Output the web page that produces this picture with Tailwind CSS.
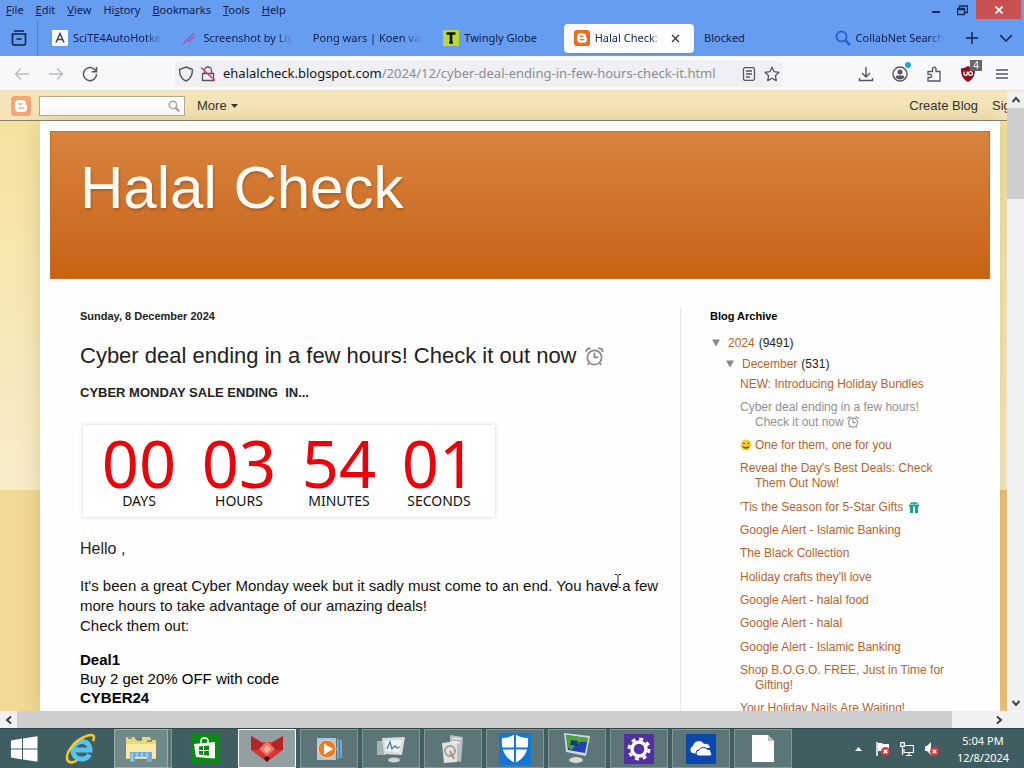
<!DOCTYPE html>
<html lang="en">
<head>
<meta charset="utf-8">
<title>Halal Check</title>
<script src="https://cdn.jsdelivr.net/npm/@tailwindcss/browser@4"></script>
</head>
<body class="h-screen overflow-hidden flex flex-col font-['Noto_Sans','Open_Sans',sans-serif] text-[11px] text-[#101c48]">
<svg class="hidden">
  <symbol id="clock" viewBox="0 0 20 20"><g fill="none" stroke="currentColor" stroke-width="1.8"><circle cx="10" cy="11" r="7.5"/><path d="M10 6v5h4M1 5q1-4 5-3.500M19 5q-1-4-5-3.500M4.500 17 3 19M15.500 17l1.500 2"/></g></symbol>
  <symbol id="blogger" viewBox="0 0 20 20"><rect width="20" height="20" rx="3.500" fill="currentColor"/><path fill="#fff" d="M8 4h3a4 4 0 0 1 4 4c0 1 .3 1.300 1 1.500v3A3.800 3.800 0 0 1 12 16H8a4 4 0 0 1-4-4V8a4 4 0 0 1 4-4"/><path stroke="currentColor" stroke-width="1.600" stroke-linecap="round" d="M8 8h3M8 12h4.500"/></symbol>
  <symbol id="search" viewBox="0 0 16 16"><g fill="none" stroke="currentColor"><circle cx="6.500" cy="6.500" r="5" stroke-width="2"/><path stroke-width="2.800" d="m10 10 5 5"/></g></symbol>
  <symbol id="badx" viewBox="0 0 10 10"><circle cx="5" cy="5" r="5" fill="#d8373a"/><path d="m3 3 4 4m0-4L3 7" stroke="#fff" stroke-width="1.500"/></symbol>
</svg>

<header class="bg-[#679df1] shrink-0">
  <div class="h-5 flex items-start justify-between">
    <nav class="flex gap-3 pl-[6px] leading-5" aria-label="Menu bar">
      <button><u>F</u>ile</button><button><u>E</u>dit</button><button><u>V</u>iew</button><button>Hi<u>s</u>tory</button><button><u>B</u>ookmarks</button><button><u>T</u>ools</button><button><u>H</u>elp</button>
    </nav>
    <div class="flex items-start pr-[3px]">
      <button aria-label="Minimize" class="w-6 h-5 grid place-items-center"><svg class="w-2 h-2" viewBox="0 0 8 8"><path d="M0 6h8" stroke="#16284f" stroke-width="2"/></svg></button>
      <button aria-label="Restore" class="w-7 h-5 grid place-items-center"><svg class="w-[11px] h-[11px]" viewBox="0 0 11 11" fill="none" stroke="#16284f"><path d="M.5 3.500h7v6h-7zM2.500 3V1h8v6.500H8M.5 4.500h7" stroke-width="1.300"/></svg></button>
      <button aria-label="Close" class="w-[45px] h-[19px] bg-[#c75050] grid place-items-center"><svg class="w-2 h-2" viewBox="0 0 8 8"><path d="m.5.5 7 7m0-7-7 7" stroke="#fff" stroke-width="1.700"/></svg></button>
    </div>
  </div>
  <div class="h-9 flex items-center">
    <button aria-label="Recent browsing" class="w-[37px] grid place-items-center self-stretch"><svg class="w-4 h-4" viewBox="0 0 16 16" fill="none" stroke="#10204c" stroke-width="1.600"><path d="M3 1h10M1.500 4h13v9.500a1.500 1.500 0 0 1-1.500 1.500H3a1.500 1.500 0 0 1-1.500-1.500zM5.500 9h5"/></svg></button>
    <div class="w-px h-9 bg-[#527fce] mr-1 self-start shrink-0"></div>
    <div role="tablist" class="flex flex-1 min-w-0 h-[29px] whitespace-nowrap">
      <button role="tab" class="flex flex-1 basis-0 min-w-0 items-center gap-[5px] px-[10px]"><svg class="w-4 h-4 shrink-0" viewBox="0 0 16 16"><rect width="16" height="16" rx="1" fill="#f8f8fb"/><path d="m4 12.500 4-9 4 9M5.500 9.500h5" fill="none" stroke="#444" stroke-width="1.500"/></svg><span class="overflow-hidden flex-1 text-left [mask-image:linear-gradient(to_right,#000_82%,transparent)]">SciTE4AutoHotkey</span></button>
      <button role="tab" class="flex flex-1 basis-0 min-w-0 items-center gap-[5px] px-[10px]"><svg class="w-4 h-4 shrink-0" viewBox="0 0 16 16"><path d="M1 14 12 3M6 12l7-6" stroke="#b04aa8" stroke-width="1.300"/></svg><span class="overflow-hidden flex-1 text-left [mask-image:linear-gradient(to_right,#000_82%,transparent)]">Screenshot by Lightshot</span></button>
      <button role="tab" class="flex flex-1 basis-0 min-w-0 items-center px-[10px]"><span class="overflow-hidden flex-1 text-left [mask-image:linear-gradient(to_right,#000_82%,transparent)]">Pong wars | Koen van Gilst</span></button>
      <button role="tab" class="flex flex-1 basis-0 min-w-0 items-center gap-[5px] px-[10px]"><svg class="w-4 h-4 shrink-0" viewBox="0 0 16 16"><rect width="16" height="16" fill="#bcd832"/><path d="M3.500 3.500h9M8 3v10M6 12.500h4" stroke="#111" stroke-width="2.600"/></svg><span class="overflow-hidden flex-1 text-left">Twingly Globe</span></button>
      <button role="tab" aria-selected="true" class="flex flex-1 basis-0 min-w-0 items-center gap-[5px] px-[10px] rounded bg-[#fdfdff] shadow-sm"><svg class="w-4 h-4 shrink-0 text-[#ee6a21]"><use href="#blogger"/></svg><span class="overflow-hidden flex-1 text-left [mask-image:linear-gradient(to_right,#000_82%,transparent)]">Halal Check: Cyber</span><svg class="w-[9px] h-[9px] mx-[4px] shrink-0" viewBox="0 0 9 9"><path d="m1 1 7 7m0-7L1 8" stroke="#333" stroke-width="1.200"/></svg></button>
      <button role="tab" class="flex flex-1 basis-0 min-w-0 items-center px-[10px]"><span>Blocked</span></button>
      <button role="tab" class="flex flex-1 basis-0 min-w-0 items-center gap-[5px] px-[10px]"><svg class="w-4 h-4 shrink-0 text-[#2b62cf]"><use href="#search"/></svg><span class="overflow-hidden flex-1 text-left [mask-image:linear-gradient(to_right,#000_82%,transparent)]">CollabNet Search</span></button>
    </div>
    <button aria-label="New tab" class="w-[33px] grid place-items-center"><svg class="w-3 h-3" viewBox="0 0 12 12"><path d="M6 0v12M0 6h12" stroke="#10204c" stroke-width="1.400"/></svg></button>
    <button aria-label="List all tabs" class="w-9 grid place-items-center"><svg class="w-3 h-3" viewBox="0 0 12 12"><path d="m0 3 6 6 6-6" fill="none" stroke="#10204c" stroke-width="1.500"/></svg></button>
  </div>
</header>

<div class="h-[35px] shrink-0 bg-[#f8f8fb] flex items-center pt-[2px] border-b border-[#e8dfc6] text-[#55555f]">
  <div class="flex gap-[18px] pl-[14px] w-[175px]">
    <button aria-label="Back"><svg class="w-4 h-4 text-[#b9b9bf]" viewBox="0 0 16 16" fill="none" stroke="currentColor" stroke-width="1.300"><path d="M15 8H1.500M7 2.500 1.500 8 7 13.500"/></svg></button>
    <button aria-label="Forward"><svg class="w-4 h-4 text-[#b9b9bf]" viewBox="0 0 16 16" fill="none" stroke="currentColor" stroke-width="1.300"><path d="M1 8h13.500M9 2.500 14.500 8 9 13.500"/></svg></button>
    <button aria-label="Reload"><svg class="w-4 h-4" viewBox="0 0 16 16" fill="none" stroke="currentColor" stroke-width="1.500"><path d="M14.500 8A6.500 6.500 0 1 1 12 3l2 2M14.500 1v4.700H9.700"/></svg></button>
  </div>
  <div class="flex flex-1 min-w-0 items-center h-[26px] bg-[#f0f0f4] rounded px-[3px]">
    <svg class="w-4 h-4 shrink-0" viewBox="0 0 16 16" fill="none" stroke="currentColor" stroke-width="1.400"><path d="M8 1 14.500 3.500C14.500 9 13 13 8 15 3 13 1.500 9 1.500 3.500z"/></svg>
    <svg class="w-4 h-4 shrink-0 ml-[6px]" viewBox="0 0 16 16" fill="none" stroke="currentColor" stroke-width="1.300"><path d="M2.500 7.500h11v7h-11zM4.500 7V4.500a3.500 3.500 0 0 1 7 0V7"/><path d="m1 1.500 14 13" stroke="#d83c6a" stroke-width="1.500"/></svg>
    <span class="ml-[7px] flex-1 min-w-0 overflow-hidden whitespace-nowrap text-[13px] text-[#8c8c93]"><span class="text-[#15141a]">ehalalcheck.blogspot.com</span>/2024/12/cyber-deal-ending-in-few-hours-check-it.html</span>
    <button aria-label="Reader view" class="mr-2"><svg class="w-[14px] h-[14px] block" viewBox="0 0 14 14" fill="none" stroke="currentColor" stroke-width="1.300"><rect x="1.500" y=".7" width="11" height="12.600" rx="1.500"/><path d="M4 4h6M4 7h6M4 10h4"/></svg></button>
    <button aria-label="Bookmark"><svg class="w-4 h-4 block" viewBox="0 0 16 16" fill="none" stroke="currentColor" stroke-width="1.300" stroke-linejoin="round"><path d="m8 1.200 2.100 4.500 4.900.6-3.600 3.400.9 4.900L8 12.200l-4.300 2.400.9-4.900L1 6.300l4.900-.6z"/></svg></button>
  </div>
  <div class="flex gap-[18px] pl-[75px] pr-[14px]">
    <button aria-label="Downloads"><svg class="w-4 h-4" viewBox="0 0 16 16" fill="none" stroke="currentColor" stroke-width="1.400"><path d="M8 1v10M4 7l4 4 4-4M1.500 12v2.500h13V12"/></svg></button>
    <button aria-label="Account" class="relative"><svg class="w-4 h-4" viewBox="0 0 16 16"><circle cx="8" cy="8" r="7" fill="none" stroke="currentColor" stroke-width="1.400"/><circle cx="8" cy="6" r="2.500" fill="currentColor"/><path d="M3.500 11.500q0-2 2-2h5q2 0 2 2Q10.500 13.500 8 13.500t-4.500-2" fill="currentColor"/></svg><span class="absolute -top-1 -right-[3px] w-[6px] h-[6px] rounded-full bg-[#1ba6e0]"></span></button>
    <button aria-label="Extensions"><svg class="w-4 h-4" viewBox="0 0 16 16" fill="none" stroke="currentColor" stroke-width="1.300"><path d="M2 5.500h4.500V3a1.700 1.700 0 0 1 3.500 0v2.500h4V15H2v-3.500h2a1.600 1.600 0 0 0 0-3.200H2z"/></svg></button>
    <button aria-label="uBlock Origin" class="relative"><svg class="w-4 h-4" viewBox="0 0 16 16"><path d="M8 0q3 2.300 7 2.300C15.500 9 13 13.500 8 16 3 13.500.5 9 1 2.300 5 2.300 8 0 8 0" fill="#8c0f1c"/><path d="M4 5.500v3q1.700 1.700 3.200 0v-3" fill="none" stroke="#fff" stroke-width="1.200"/><circle cx="10.500" cy="7.500" r="1.900" fill="none" stroke="#fff" stroke-width="1.200"/></svg><span class="absolute -top-[6px] -right-[6px] w-3 h-[11px] bg-[#666] text-white text-[10px] leading-[11px] text-center">4</span></button>
    <button aria-label="Application menu"><svg class="w-4 h-4" viewBox="0 0 16 16"><path d="M2 4h12M2 8h12M2 12h12" stroke="currentColor" stroke-width="1.300"/></svg></button>
  </div>
</div>

<div class="flex flex-1 min-h-0 font-['Liberation_Sans',Arial,sans-serif] text-[#222]">
  <div class="flex-1 min-w-0 overflow-hidden flex flex-col bg-[linear-gradient(to_bottom,#f5e19c_0,#f8ecca_399px,transparent_399px),linear-gradient(to_right,#f2da94,#ecc37c)]">
    <div class="h-[30px] shrink-0 bg-[#f4e4b8] border-b border-[#8a7d6c] flex items-center text-[13px] text-[#333] whitespace-nowrap">
      <svg class="w-5 h-5 ml-[11px] text-[#f5a574]"><use href="#blogger"/></svg>
      <label class="ml-2 flex items-center w-[146px] h-5 bg-white border border-[#b9a98a] pr-1"><input type="search" aria-label="Search blog" class="min-w-0 flex-1 h-full outline-none"><svg class="w-3 h-3 text-[#a5a5a5]"><use href="#search"/></svg></label>
      <button class="ml-3 flex items-center gap-1">More <svg class="w-[7px] h-1" viewBox="0 0 7 4"><path d="M0 0h7L3.500 4z" fill="#333"/></svg></button>
      <div class="flex-1"></div>
      <a href="#" class="mr-[14px]">Create Blog</a>
      <a href="#" class="w-[15px] overflow-hidden">Sign In</a>
    </div>
    <div class="flex-1 min-h-0 ml-10 mr-[7px] bg-[#fefefe] px-[10px] pt-[10px] shadow-[0_0_20px_rgba(120,110,40,0.25)]">
      <div class="h-[148px] bg-linear-to-b from-[#d8833f] to-[#c86210] border border-[#c96c1e] pl-[29px] pt-[21px]">
        <h1 class="text-[60px] leading-[70px] text-[#fffdf8] [text-shadow:1px_2px_3px_rgba(0,0,0,0.2)]">Halal Check</h1>
      </div>
      <div class="flex pt-7">
        <article class="flex-1 min-w-0 pl-[30px] pr-6">
          <h2 class="text-[11px] leading-[18px] font-bold">Sunday, 8 December 2024</h2>
          <h3 class="mt-[17px] text-[22px] leading-7 flex items-center whitespace-nowrap">Cyber deal ending in a few hours! Check it out now <svg class="ml-2 w-[19px] h-[19px] text-[#888]"><use href="#clock"/></svg></h3>
          <p class="mt-[13px] text-[13px] leading-5 font-bold">CYBER MONDAY SALE ENDING&nbsp; IN...</p>
          <div class="mt-[22px] ml-[3px] w-[412px] h-[92px] bg-white shadow-[0_0_4px_rgba(0,0,0,0.18)] flex px-[6px] pt-[9px] text-center font-['Noto_Sans',sans-serif] text-[#111]">
            <div class="flex-1"><div class="text-[65px] leading-[58px] text-[#ee0008]">00</div><div class="text-sm leading-[18px]">DAYS</div></div>
            <div class="flex-1"><div class="text-[65px] leading-[58px] text-[#ee0008]">03</div><div class="text-sm leading-[18px]">HOURS</div></div>
            <div class="flex-1"><div class="text-[65px] leading-[58px] text-[#ee0008]">54</div><div class="text-sm leading-[18px]">MINUTES</div></div>
            <div class="flex-1"><div class="text-[65px] leading-[58px] text-[#ee0008]">01</div><div class="text-sm leading-[18px]">SECONDS</div></div>
          </div>
          <p class="mt-[22px] text-base leading-5">Hello ,</p>
          <p class="mt-[17px] text-[15px] leading-5 text-[#111] whitespace-nowrap">It's been a great Cyber Monday week but it sadly must come to an end. You have a few<br>more hours to take advantage of our amazing deals!<br>Check them out:</p>
          <p class="mt-[14px] text-[15px] leading-[19px] text-black"><b>Deal1</b><br>Buy 2 get 20% OFF with code<br><b>CYBER24</b></p>
        </article>
        <aside class="w-[310px] shrink-0 border-l border-[#e8e8e8] pl-[29px] h-[420px] text-xs text-[#b8622a]">
          <h2 class="text-[11px] leading-[18px] font-bold text-black">Blog Archive</h2>
          <div class="mt-2 leading-5 text-[#222] flex items-center"><button aria-label="Collapse 2024" class="mr-2 ml-[2px]"><svg class="w-2 h-2" viewBox="0 0 9 8"><path d="M0 0h9L4.500 8z" fill="#888"/></svg></button><a href="#" class="text-[#b8622a] mr-1">2024</a>(9491)</div>
          <div class="mt-px leading-5 text-[#222] flex items-center"><button aria-label="Collapse December" class="mr-2 ml-4"><svg class="w-2 h-2" viewBox="0 0 9 8"><path d="M0 0h9L4.500 8z" fill="#888"/></svg></button><a href="#" class="text-[#b8622a] mr-1">December</a>(531)</div>
          <ul class="mt-[2px] ml-[30px] w-[220px] flex flex-col gap-2 leading-[15px] [&>li]:pl-[15px] [&>li]:-indent-[15px]">
            <li class="leading-4"><a href="#">NEW: Introducing Holiday Bundles</a></li>
            <li><a href="#" class="text-[#8f8f8f]">Cyber deal ending in a few hours!<br>Check it out now <svg class="inline w-3 h-3 align-[-2px]"><use href="#clock"/></svg></a></li>
            <li><a href="#"><svg class="inline w-3 h-3 align-[-2px] mr-[3px]" viewBox="0 0 12 12"><circle cx="6" cy="6" r="5.500" fill="#f6cf2b"/><path d="M3 4.500h2M7.500 4 9 5M3 7.500q3 3 6 0" fill="none" stroke="#604510" stroke-width="1.200"/></svg>One for them, one for you</a></li>
            <li><a href="#">Reveal the Day's Best Deals: Check<br>Them Out Now!</a></li>
            <li class="leading-4"><a href="#">'Tis the Season for 5-Star Gifts <svg class="inline w-3 h-3 align-[-2px] ml-[1px]" viewBox="0 0 12 12"><path d="M1 3.500h10v2H1zM2 5h3v7H2zM7 5h3v7H7z" fill="#19a489"/><path d="M3 3q0-2 3-.5Q9 1 9 3" fill="none" stroke="#19a489" stroke-width="1.500"/></svg></a></li>
            <li><a href="#">Google Alert - Islamic Banking</a></li>
            <li><a href="#">The Black Collection</a></li>
            <li class="leading-4"><a href="#">Holiday crafts they'll love</a></li>
            <li><a href="#">Google Alert - halal food</a></li>
            <li><a href="#">Google Alert - halal</a></li>
            <li class="leading-4"><a href="#">Google Alert - Islamic Banking</a></li>
            <li><a href="#">Shop B.O.G.O. FREE, Just in Time for<br>Gifting!</a></li>
            <li><a href="#">Your Holiday Nails Are Waiting!</a></li>
          </ul>
        </aside>
      </div>
    </div>
  </div>
  <div class="w-[17px] shrink-0 bg-[#f0f0f1] flex flex-col items-center justify-between">
    <button aria-label="Scroll up" class="h-[17px] grid place-items-center"><svg class="w-2 h-2" viewBox="0 0 8 8"><path d="m.5 6 3.500-4 3.500 4" fill="none" stroke="#404040" stroke-width="2"/></svg></button>
    <div class="w-full h-[91px] bg-[#cdcdcd]"></div>
    <div class="flex-1"></div>
    <button aria-label="Scroll down" class="h-[17px] grid place-items-center"><svg class="w-2 h-2" viewBox="0 0 8 8"><path d="m.5 2 3.500 4 3.500-4" fill="none" stroke="#404040" stroke-width="2"/></svg></button>
  </div>
</div>

<div class="h-[17px] shrink-0 bg-[#f0f0f1] flex items-center">
  <button aria-label="Scroll left" class="w-[17px] grid place-items-center"><svg class="w-2 h-2" viewBox="0 0 8 8"><path d="M6 .5 2 4l4 3.500" fill="none" stroke="#404040" stroke-width="2"/></svg></button>
  <div class="flex-1 h-full bg-[#cdcdcd]"></div>
  <button aria-label="Scroll right" class="ml-[38px] mr-[17px] w-[17px] grid place-items-center"><svg class="w-2 h-2" viewBox="0 0 8 8"><path d="m2 .5 4 3.500-4 3.500" fill="none" stroke="#404040" stroke-width="2"/></svg></button>
</div>

<footer class="h-10 shrink-0 bg-[#405e62] border-t border-[#2c4448] flex items-stretch text-white">
  <button aria-label="Start" class="w-12 mr-1 grid place-items-center"><svg class="w-7 h-[26px]" viewBox="0 0 28 26" fill="#fff"><path d="M1 4.500 12 2.600v9.900H1zM13 2.400 27.500.3v12.200H13zM1 13.500h11v9.900L1 21.500zM13 13.500h14.500v12.200L13 23.600z"/></svg></button>
  <div class="flex gap-1 flex-1 min-w-0 [&>button]:w-[58px] [&>button]:shrink-0 [&>button]:grid [&>button]:place-items-center">
    <button aria-label="Internet Explorer"><svg class="w-8 h-8" viewBox="0 0 32 32" fill="none"><path d="M8 17h17c0-5-3-8.500-8-8.500S8 12.500 8 17.500 11.500 26 17 26q5 0 7.500-4.500" stroke="#56c3ee" stroke-width="5"/><path d="M3 28C-1 22 8 9 19 4c8-4 12-2 9 4M3 28q3 3 9-.5" stroke="#f3c92e" stroke-width="2.500"/></svg></button>
    <div class="flex w-[58px] shrink-0"><button aria-label="File Explorer" class="flex-1 grid place-items-center bg-[#72898b] border border-[#9aacad]"><svg class="w-8 h-7" viewBox="0 0 32 28"><path d="M1 2h8l2 3h6V2h8l1 3h5v19H1z" fill="#ead67c"/><path d="M1 9h30v14H1z" fill="#f8e9a4"/><path d="M3 3h4M12 5h5M22 6h5" stroke="#538b58" stroke-width="1.500"/><path d="M5 27V17h22v10h-5v-5H10v5z" fill="#6faedb"/><path d="M7 18v8M12 18v4M17 18v4M22 18v4" stroke="#d2ebfa"/></svg></button><span class="w-1 bg-[#5d7578] border-y border-r border-[#81979a]"></span></div>
    <button aria-label="Store"><svg class="w-7 h-[31px]" viewBox="0 0 28 31"><path fill="#0c8a16" d="M0 0h28v31H0z"/><path d="m3 11 21-2v16.500L5 24z" fill="#fff"/><path d="M10 11V8q0-3 3.500-3T17 8v2" fill="none" stroke="#fff" stroke-width="1.500"/><path d="m8 13.500 4-.4V17H8zM13 13l5-.5V17h-5zM8 18h4v4l-4-.5zM13 18h5v4.700l-5-.5z" fill="#0c8a16"/></svg></button>
    <button aria-label="Fox browser" class="bg-[#939fa1] border border-white"><svg class="w-[34px] h-7" viewBox="0 0 34 28"><path d="m1 1 10 6h12l10-6v14L17 27 1 15z" fill="#d93535"/><path d="m1 1 10 6 6 8L1 15zM33 1 23 7l-6 8 16 0z" fill="#b52228"/><path d="m17 6 8 8-8 7-8-7z" fill="#f07565"/><path d="m17 10 4 4-4 4-4-4z" fill="#f8b0a0"/><path d="m14 23 3-2 3 2-3 4z" fill="#471014"/></svg></button>
    <button aria-label="Media player" class="bg-[#5d7578] border border-[#81979a]"><svg class="w-7 h-7" viewBox="0 0 28 28"><path d="M2 3h19v22H2z" fill="#a8c8de"/><path d="M22 4h2v20h-2zM25 5h2v18h-2z" fill="#6fa9d4"/><circle cx="12" cy="14" r="9" fill="#ee7b20" stroke="#f8ded0"/><path d="m9 8.500 9 5.500-9 5.500z" fill="#fff"/></svg></button>
    <button aria-label="System monitor" class="bg-[#5d7578] border border-[#81979a]"><svg class="w-[30px] h-7" viewBox="0 0 30 28"><path d="M1 6h9v14H1z" fill="#a8b2b1"/><path d="m6 3 23-1-3 18-18-1z" fill="#d8dede"/><path d="m9 6 17-1-3 12-13-1z" fill="#eef4f6"/><path d="m11 14 3-7 2 7 3-3 2 2 3-1" fill="none" stroke="#557b9a" stroke-width="1.300"/><ellipse cx="18" cy="25" rx="6" ry="2.500" fill="#cdd2d2"/></svg></button>
    <button aria-label="Services" class="bg-[#5d7578] border border-[#81979a]"><svg class="w-6 h-[30px]" viewBox="0 0 24 30"><path d="m9 1 13 2-2 25-11-2z" fill="#b9bec6"/><path d="m1 9 15-2v21l-13 1z" fill="#e3e2df"/><path d="m11 4 9 1m-9 3 8 1" stroke="#fff"/><circle cx="9" cy="17" r="5" fill="none" stroke="#aa9e92" stroke-width="2"/><path d="m9 17 4 8" stroke="#a49480" stroke-width="2"/></svg></button>
    <button aria-label="Windows Defender" class="bg-[#5d7578] border border-[#81979a]"><svg class="w-8 h-8" viewBox="0 0 32 32"><path fill="#1277d2" d="M0 0h32v32H0z"/><path d="M16 1q5 4 13 4c1 12-3 20-13 25C6 25 2 17 3 5q8 0 13-4" fill="#fff"/><path d="M16 0v31M2 15.500h28" stroke="#1277d2" stroke-width="2"/></svg></button>
    <button aria-label="Remote desktop" class="bg-[#5d7578] border border-[#81979a]"><svg class="w-7 h-[31px]" viewBox="0 0 28 31"><path d="m1 0 26 3-4 20L3 19z" fill="#cdd8da"/><path d="m3 2 22 3-3 15L5 17z" fill="#1e43b4"/><path d="m3 2 22 3-1 4q-9-1-12 4L8 17l-3-3z" fill="#4fa535"/><path d="m8 7 7 1-1 5-7-1z" fill="#183c7a"/><ellipse cx="13" cy="27" rx="7" ry="3" fill="#d4d8d8"/></svg></button>
    <button aria-label="Settings" class="bg-[#5d7578] border border-[#81979a]"><svg class="w-[30px] h-[30px]" viewBox="0 0 30 30"><path fill="#51309f" d="M0 0h30v30H0z"/><circle cx="15" cy="15" r="7" fill="none" stroke="#fff" stroke-width="3.500"/><circle cx="15" cy="15" r="10" fill="none" stroke="#fff" stroke-width="3" stroke-dasharray="3.900 3.954"/></svg></button>
    <button aria-label="OneDrive" class="bg-[#5d7578] border border-[#81979a]"><svg class="w-[30px] h-[30px]" viewBox="0 0 30 30"><path fill="#0b48ae" d="M0 0h30v30H0z"/><path d="M6 19a4 4 0 0 1 1-7 6 6 0 0 1 11-2q5-1 6 4-3-1-5 1-6-1-7 5z" fill="#fff"/><path d="M13 22a3 3 0 0 1 0-6 5 5 0 0 1 8-1q4 0 4 3 2 3-1 4z" fill="#fff" stroke="#0b48ae"/></svg></button>
    <button aria-label="Document" class="bg-[#5d7578] border border-[#81979a]"><svg class="w-[22px] h-[27px]" viewBox="0 0 22 27"><path d="M0 0h16l6 6v21H0z" fill="#fdfdfd"/><path d="M16 0v6h6z" fill="#b8c2c2"/></svg></button>
  </div>
  <div class="flex items-center gap-[10px] pr-[14px]">
    <button aria-label="Show hidden icons" class="mr-1"><svg class="w-[7px] h-1" viewBox="0 0 7 4"><path d="m0 4 3.500-4L7 4z" fill="#fff"/></svg></button>
    <svg class="w-[14px] h-[14px]" viewBox="0 0 14 14"><path d="M1 0v14" stroke="#fff" stroke-width="1.500"/><path d="M2 1h4l1 1h6v7H2z" fill="#fff"/><use href="#badx" x="5" y="5" width="9" height="9"/></svg>
    <svg class="w-[14px] h-[14px]" viewBox="0 0 14 14" fill="none" stroke="#fff" stroke-width="1.200"><path d="M5 3.500h8.500v7H4V7M9 11v2M6 13.500h6M.7.700h3.600v3.600H.7zM2.500 4.500V13"/></svg>
    <svg class="w-4 h-[14px]" viewBox="0 0 16 14"><path d="M1 4v5h2l4 4V0L3 4z" fill="#fff"/><use href="#badx" x="6" y="5" width="9" height="9"/></svg>
    <div class="ml-[6px] w-[54px] text-[11px] leading-[17px] flex flex-col items-center"><span>5:04 PM</span><span>12/8/2024</span></div>
  </div>
</footer>

<svg class="absolute left-[614px] top-[574px] w-2 h-[14px]" viewBox="0 0 8 14" aria-hidden="true"><path d="M1 .5h2l1 1 1-1h2M4 1.500v11M1 13.500h2l1-1 1 1h2" fill="none" stroke="#222"/></svg>
</body>
</html>
